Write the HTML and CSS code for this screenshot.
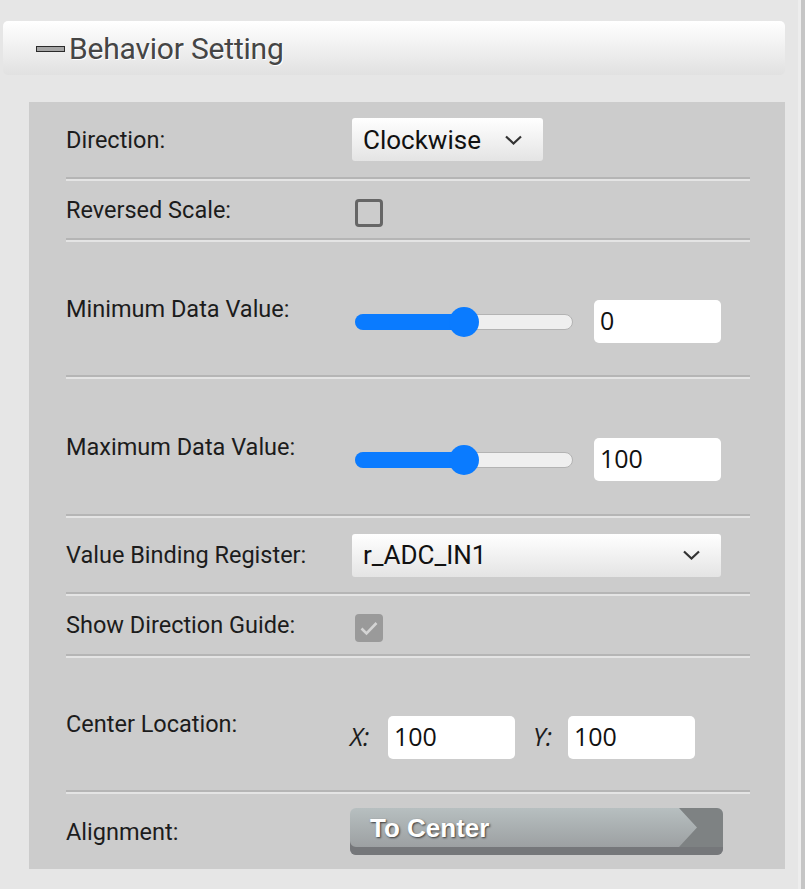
FILE: index.html
```html
<!DOCTYPE html>
<html>
<head>
<meta charset="utf-8">
<link rel="stylesheet" href="styles.css">
</head>
<body>
<div class="page">
  <div class="main">
    <div class="header">
      <span class="minus"></span>
      <span class="title">Behavior Setting</span>
    </div>
    <div class="panel">
      <div class="row r1">
        <div class="label">Direction:</div>
        <div class="ctrl">
          <div class="select sel-short">
            <span>Clockwise</span>
            <svg class="chev" width="19" height="12" viewBox="0 0 19 12"><path d="M2 2.5 L9.5 9.5 L17 2.5" fill="none" stroke="#333" stroke-width="2.2"/></svg>
          </div>
        </div>
      </div>
      <div class="row r2">
        <div class="label">Reversed Scale:</div>
        <div class="ctrl"><span class="checkbox"></span></div>
      </div>
      <div class="row r3">
        <div class="label">Minimum Data Value:</div>
        <div class="ctrl tall">
          <div class="slider">
            <div class="fill" style="width:50%"></div>
            <div class="thumb" style="left:50%"></div>
          </div>
          <div class="input">0</div>
        </div>
      </div>
      <div class="row r4">
        <div class="label">Maximum Data Value:</div>
        <div class="ctrl tall">
          <div class="slider">
            <div class="fill" style="width:50%"></div>
            <div class="thumb" style="left:50%"></div>
          </div>
          <div class="input">100</div>
        </div>
      </div>
      <div class="row r5">
        <div class="label">Value Binding Register:</div>
        <div class="ctrl">
          <div class="select sel-long">
            <span>r_ADC_IN1</span>
            <svg class="chev" width="19" height="12" viewBox="0 0 19 12"><path d="M2 2.5 L9.5 9.5 L17 2.5" fill="none" stroke="#333" stroke-width="2.2"/></svg>
          </div>
        </div>
      </div>
      <div class="row r6">
        <div class="label">Show Direction Guide:</div>
        <div class="ctrl">
          <span class="checkbox checked">
            <svg width="28" height="28" viewBox="0 0 28 28"><path d="M6.5 14.5 L11.5 19.5 L21.5 9" fill="none" stroke="#d4d4d4" stroke-width="2.6"/></svg>
          </span>
        </div>
      </div>
      <div class="row r7">
        <div class="label">Center Location:</div>
        <div class="ctrl tall">
          <span class="axis">X:</span>
          <div class="input">100</div>
          <span class="axis axis-y">Y:</span>
          <div class="input">100</div>
        </div>
      </div>
      <div class="row r8">
        <div class="label">Alignment:</div>
        <div class="ctrl">
          <div class="button">
            <span>To Center</span>
            <svg class="arrow" width="44" height="39" viewBox="0 0 44 39"><polygon points="0,0 44,0 44,39 0,39 18,19.5" fill="#7e8283"/></svg>
          </div>
        </div>
      </div>
    </div>
  </div>
  <div class="scrollbar"></div>
</div>
</body>
</html>
```
FILE: styles.css
```css
html, body {
  margin: 0;
  padding: 0;
}
body {
  background: #e6e6e6;
  font-family: Roboto, "Liberation Sans", sans-serif;
  width: 805px;
  height: 889px;
  overflow: hidden;
}
.page {
  display: flex;
  height: 889px;
}
.main {
  width: 798px;
  padding-top: 21px;
  box-sizing: border-box;
}
.scrollbar {
  width: 4px;
  border-left: 3px solid #ededed;
  background: #c5c5c5;
}
.header {
  margin-left: 3px;
  width: 782px;
  height: 54px;
  box-sizing: border-box;
  border-radius: 5px;
  background: linear-gradient(#ffffff, #e1e1e1);
  display: flex;
  align-items: center;
  padding-left: 33px;
}
.minus {
  width: 27px;
  height: 4px;
  border: 1px solid #2a2a2a;
  background: #a5a5a5;
  margin-top: 1px;
}
.title {
  font-size: 30px;
  color: #454545;
  text-shadow: 1px 1px 0 #fff;
  margin-left: 4px;
  letter-spacing: -0.2px;
}
.panel {
  margin-top: 27px;
  margin-left: 29px;
  width: 756px;
  height: 767px;
  box-sizing: border-box;
  background: #cccccc;
  padding: 0 35px 0 37px;
}
.row {
  display: flex;
  align-items: center;
  box-sizing: border-box;
}
.row + .row {
  border-top: 2px solid #b5b5b5;
  box-shadow: inset 0 2px 0 #e4e4e4;
  padding-top: 2px;
}
.r1 { height: 75px; }
.r2 { height: 61px; }
.r3 { height: 137px; }
.r4 { height: 139px; }
.r5 { height: 78px; }
.r6 { height: 62px; }
.r7 { height: 136px; }
.r8 { height: 79px; }
.label {
  width: 284px;
  font-size: 23.5px;
  color: #1c1c1c;
}
.ctrl {
  display: flex;
  align-items: center;
}
.ctrl.tall {
  padding-top: 26px;
}
.select {
  height: 43px;
  box-sizing: border-box;
  margin-left: 2px;
  border-radius: 3px;
  background: linear-gradient(#ffffff, #e4e4e4);
  display: flex;
  align-items: center;
  justify-content: space-between;
  padding-left: 11px;
  font-size: 26px;
  color: #111;
}
.sel-short {
  width: 191px;
  padding-right: 20px;
}
.sel-long {
  width: 369px;
  padding-right: 20px;
}
.chev {
  display: block;
}
.checkbox {
  display: block;
  width: 28px;
  height: 28px;
  box-sizing: border-box;
  margin-left: 5px;
  margin-top: 6px;
  border: 3px solid #666;
  border-radius: 4px;
}
.checkbox.checked {
  border: none;
  background: #9a9a9a;
}
.checkbox.checked svg {
  display: block;
}
.slider {
  position: relative;
  margin-left: 5px;
  width: 218px;
  height: 16px;
  box-sizing: border-box;
  border: 1px solid #b3b3b3;
  border-radius: 8px;
  background: #efefef;
  margin-right: 21px;
}
.fill {
  height: 16px;
  margin: -1px 0 0 -1px;
  border-radius: 8px 0 0 8px;
  background: #0a7bff;
}
.thumb {
  position: absolute;
  top: -8px;
  width: 30px;
  height: 30px;
  margin-left: -15px;
  border-radius: 50%;
  background: #0a7bff;
}
.input {
  width: 127px;
  height: 43px;
  box-sizing: border-box;
  border-radius: 5px;
  background: #fff;
  font-family: "Open Sans", sans-serif;
  font-size: 25px;
  color: #111;
  padding-left: 6px;
  line-height: 40px;
}
.axis {
  font-size: 25px;
  font-style: italic;
  color: #1c1c1c;
  width: 38px;
  font-family: "Open Sans", sans-serif;
  margin-top: -2px;
}
.axis-y {
  margin-left: 18px;
  width: 35px;
}
.button {
  position: relative;
  width: 373px;
  height: 47px;
  box-sizing: border-box;
  border-radius: 6px;
  overflow: hidden;
  background: linear-gradient(#b7bfc0, #979a9c);
  box-shadow: inset 0 -8px 0 #75777a;
  padding-left: 20px;
  font-family: "Liberation Sans", Arial, sans-serif;
  font-weight: bold;
  font-size: 26px;
  color: #fff;
  line-height: 40px;
  text-shadow: 1px 1px 2px #3a3a3a;
}
.arrow {
  position: absolute;
  right: 0;
  top: 0;
  display: block;
}
```
